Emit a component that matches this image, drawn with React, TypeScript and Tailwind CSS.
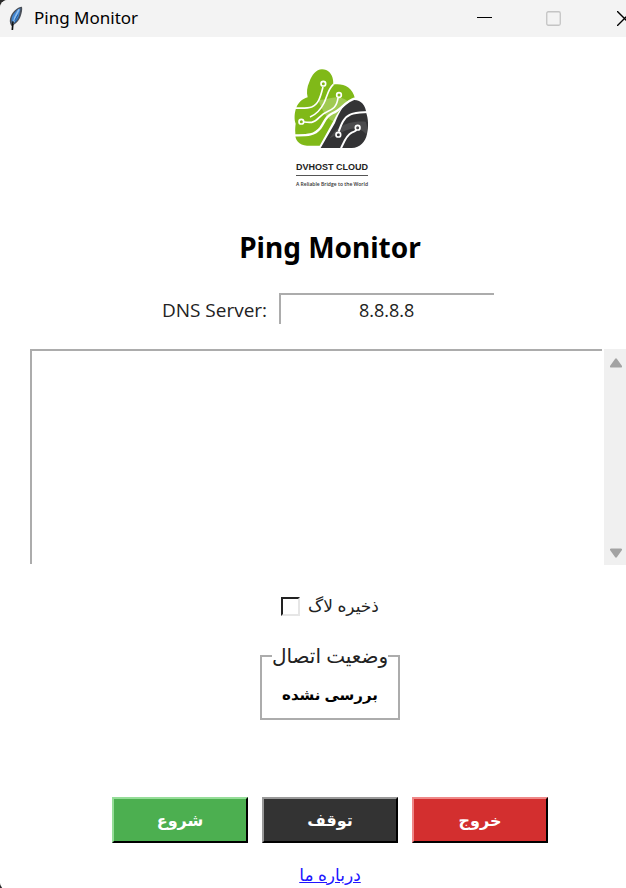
import React, { useState } from 'react';

const persian = "font-['Noto_Sans','DejaVu_Sans',sans-serif]";

function Feather() {
  return (
    <svg width="16" height="26" viewBox="0 0 48 78" aria-hidden="true">
      <path d="M42 2C28 2 10 20 6 38c-2 9 1 18 5 22 12-5 23-16 27-29 3-10 6-20 4-29Z" fill="#4a4f58" />
      <path d="M37 7C26 11 14 24 11 37c-1 8 0 13 2 17 8-5 17-14 20-25 2-8 4-15 4-22Z" fill="#3f84d0" />
      <path d="M33 10C26 22 19 36 15 54" stroke="#8fbdec" strokeWidth="5" fill="none" />
      <path d="M30 26 20 44M31 36 20 50" stroke="#2461a5" strokeWidth="3" />
      <path d="M15 46 13 72" stroke="#111" strokeWidth="5" />
    </svg>
  );
}

function CloudLogo() {
  return (
    <svg width="78" height="84" viewBox="42 22 234 252" aria-hidden="true">
      <path
        d="M84 258C60 256 47 242 49 220c-1-10 0-20 1-28-5-12-4-34 2-48 6-14 16-26 34-31-4-14-2-32 5-46 8-22 20-37 38-38 18 0 31 14 33 32 1 6 1 10 0 14 28-5 58 5 66 42-28 10-48 32-62 62L122 258Z"
        fill="#80b918"
      />
      <path d="M118 120c26 4 46-16 78-2 8 4 12 8 14 12-18 12-34 32-42 56-24-4-40-36-50-66Z" fill="#fff" fillOpacity=".25" />
      <path d="M125 265 168 190c14-36 30-62 52-69 25-3 40 14 42 40 6 16 7 42 2 62-5 24-20 41-46 42Z" fill="#333335" />
      <path d="M152 236c16-24 40-54 108-50 6 14 5 24 2 38-34-36-66-8-110 12Z" fill="#fff" fillOpacity=".12" />
      <g fill="none" stroke="#fff" strokeWidth="5">
        <path d="M163 74c-16 14-20 40-28 56-10 20-22 34-42 42" />
        <path d="M132 82c-8 32-14 52-34 60-14 5-28 4-50 3" />
        <path d="M177 115c-4 28-16 34-34 42-22 8-24 27-45 31-8 1-16 0-23-1" />
        <path d="M48 227c34 0 57 2 76-22 14-20 15-35 38-45 24-9 35-34 66-44" strokeWidth="7" />
        <path d="M179 216c7-20 14-43 36-52 15-7 30-6 52-7" strokeWidth="6" />
        <path d="M186 266c8-17 16-40 32-47 8-3 11-5 15-8" strokeWidth="6" />
        <circle cx="133" cy="72" r="7" />
        <circle cx="180" cy="106" r="7" />
        <circle cx="67" cy="186" r="7" />
        <circle cx="178" cy="225" r="7" />
        <circle cx="236" cy="204" r="7" />
      </g>
    </svg>
  );
}

function ActionButton({ label, tone }: { label: string; tone: string }) {
  return (
    <button
      type="button"
      className={`h-[46px] w-[136px] border-2 border-r-black border-b-black text-base font-bold text-white ${persian} ${tone}`}
    >
      {label}
    </button>
  );
}

export default function App() {
  const [server, setServer] = useState('8.8.8.8');
  return (
    <div className="min-h-screen overflow-hidden bg-[#2b2b2b] font-['Open_Sans','Noto_Sans',sans-serif] text-black">
      <div className="flex min-h-screen flex-col overflow-hidden rounded-tl-lg rounded-bl-md bg-white">
        <header className="flex h-[37px] shrink-0 items-center bg-[#f3f3f3] pl-2">
          <Feather />
          <span className="ml-[10px] pb-[2px] font-['Noto_Sans',sans-serif] text-[17px] leading-6">Ping Monitor</span>
          <div className="ml-auto flex items-center">
            <button type="button" aria-label="Minimize" className="mr-[54px]">
              <svg width="15" height="15" viewBox="0 0 15 15"><path d="M0 6.5h15" stroke="#000" /></svg>
            </button>
            <button type="button" aria-label="Maximize" disabled className="mr-14">
              <svg width="15" height="15" viewBox="0 0 15 15"><rect x=".75" y=".75" width="13.5" height="13.5" rx="1.5" fill="none" stroke="#c4c4c4" strokeWidth="1.3" /></svg>
            </button>
            <button type="button" aria-label="Close">
              <svg width="9" height="15" viewBox="0 0 9 15"><path d="m0 0 15 15M0 15 15 0" stroke="#000" strokeWidth="1.4" /></svg>
            </button>
          </div>
        </header>

        <main className="flex flex-col">
          <div className="flex flex-col items-center pt-[30px] pl-[38px]">
            <CloudLogo />
            <div className="mt-2 border-b border-[#555] font-['Liberation_Sans',sans-serif] text-[9px] leading-4 font-bold whitespace-nowrap text-[#222]">DVHOST CLOUD</div>
            <div className="text-[5px] leading-4 font-semibold whitespace-nowrap text-[#333]">A Reliable Bridge to the World</div>
          </div>

          <div className="flex flex-col items-center pl-[34px]">
            <h1 className="mt-[35px] font-['Noto_Sans',sans-serif] text-[28px] leading-10 font-bold">Ping Monitor</h1>
            <div className="mt-[25px] flex items-center pr-1">
              <label htmlFor="dns" className="mt-1 text-[19px] leading-7 text-[#222]">DNS Server:</label>
              <input
                id="dns"
                value={server}
                onChange={(e) => setServer(e.target.value)}
                className="ml-3 h-[31px] w-[215px] border-t-2 border-l-2 border-[#acacac] pt-[2px] pr-[2px] text-center text-lg text-[#222] outline-none"
              />
            </div>
          </div>

          <div className="mt-[25px] ml-[30px] flex h-[216px]">
            <textarea aria-label="Log" readOnly className="mr-[2px] h-[215px] min-w-0 flex-1 resize-none border-t-2 border-l-2 border-[#acacac] outline-none" />
            <div className="flex w-[22px] flex-col items-center justify-between bg-[#f0f0f0] pt-2 pb-[6px] pl-[2px]">
              <svg width="14" height="12" viewBox="0 0 14 12"><path d="M6 2q1-1.500 2 0l5 7q.5 1.500-1 1.500H2q-1.500 0-1-1.500Z" fill="#a3a3a3" /></svg>
              <svg width="14" height="12" viewBox="0 0 14 12"><path d="M6 10q1 1.500 2 0l5-7q.5-1.500-1-1.500H2q-1.500 0-1 1.500Z" fill="#a3a3a3" /></svg>
            </div>
          </div>

          <div className={`flex flex-col items-center pl-[34px] ${persian}`}>
            <div className="mt-[27px] flex items-center gap-2">
              <input id="savelog" type="checkbox" className="h-[19px] w-[19px] appearance-none border-2 border-t-[#222] border-r-[#e6e6e6] border-b-[#e6e6e6] border-l-[#222] bg-white" />
              <label htmlFor="savelog" dir="rtl" className="text-[17px] leading-7 text-[#222]">ذخیره لاگ</label>
            </div>
            <fieldset dir="rtl" className="mt-[22px] h-[78px] w-[140px] border-2 border-[#acacac] px-[7px] text-center">
              <legend className="mx-auto text-xl leading-7 whitespace-nowrap text-[#222]">وضعیت اتصال</legend>
              <p className="mt-2 text-[15px] leading-8 font-bold whitespace-nowrap">بررسی نشده</p>
            </fieldset>
            <div className="mt-[77px] flex gap-[14px]">
              <ActionButton label="شروع" tone="bg-[#4caf50] border-t-[#95dd98] border-l-[#95dd98]" />
              <ActionButton label="توقف" tone="bg-[#333333] border-t-[#999999] border-l-[#999999]" />
              <ActionButton label="خروج" tone="bg-[#d32f2f] border-t-[#ef8888] border-l-[#ef8888]" />
            </div>
            <a href="#about" dir="rtl" className="mt-[18px] text-[17px] leading-7 text-[#2015ff] underline">درباره ما</a>
          </div>
        </main>
      </div>
    </div>
  );
}
